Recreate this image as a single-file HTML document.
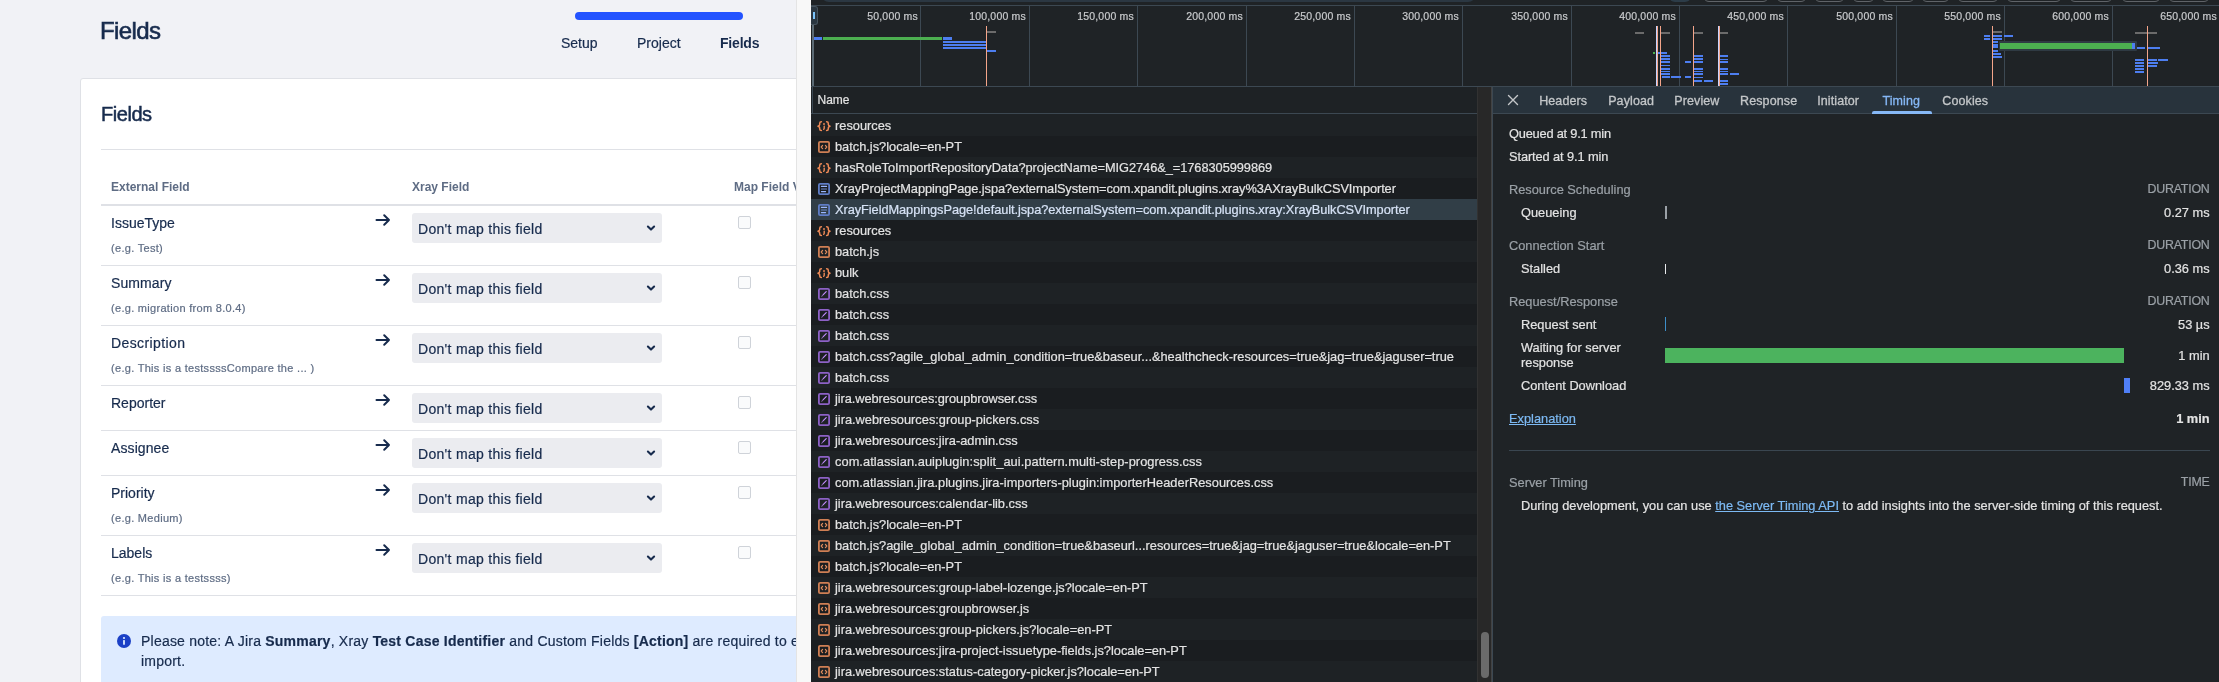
<!DOCTYPE html>
<html><head><meta charset="utf-8"><style>
*{margin:0;padding:0;box-sizing:border-box}
html,body{width:2219px;height:682px;overflow:hidden;background:#f8f8f8;font-family:"Liberation Sans",sans-serif}
.abs{position:absolute}
#page{position:absolute;left:0;top:0;width:796px;height:682px;background:#f1f2f6;overflow:hidden;color:#172b4d;will-change:transform}
#pgline{position:absolute;left:796px;top:0;width:1px;height:682px;background:#e4e4e4}
#dt{position:absolute;left:811px;top:0;width:1408px;height:682px;background:#1f2326;overflow:hidden;color:#e3e3e3;will-change:transform}
.t{position:absolute;white-space:nowrap}
#dt .t{-webkit-text-stroke:0.2px currentColor}
#page .t{-webkit-text-stroke:0.2px currentColor}
</style></head><body>
<div id="page">
<div class="t" style="left:100px;top:16px;font-size:24px;line-height:30px;color:#172b4d;-webkit-text-stroke:0.6px #172b4d;letter-spacing:-0.6px">Fields</div>
<div class="abs" style="left:575px;top:12px;width:168px;height:8px;border-radius:4px;background:#2353ff"></div>
<div class="t" style="left:561px;top:34px;font-size:14px;line-height:18px;color:#172b4d">Setup</div>
<div class="t" style="left:637px;top:34px;font-size:14px;line-height:18px;color:#172b4d">Project</div>
<div class="t" style="left:720px;top:34px;font-size:14px;line-height:18px;font-weight:700;color:#172b4d;letter-spacing:-0.2px;-webkit-text-stroke:0">Fields</div>
<div class="abs" style="left:80px;top:78px;width:760px;height:700px;background:#fff;border:1px solid #dfe1e6;border-radius:3px"></div>
<div class="t" style="left:101px;top:101px;font-size:20px;line-height:26px;color:#172b4d;-webkit-text-stroke:0.5px #172b4d;letter-spacing:-0.45px">Fields</div>
<div class="abs" style="left:101px;top:149px;width:700px;height:1px;background:#dfe1e6"></div>
<div class="t" style="left:111px;top:180px;font-size:12px;line-height:14px;font-weight:700;color:#5e6c84;-webkit-text-stroke:0">External Field</div>
<div class="t" style="left:412px;top:180px;font-size:12px;line-height:14px;font-weight:700;color:#5e6c84;-webkit-text-stroke:0">Xray Field</div>
<div class="t" style="left:734px;top:180px;font-size:12px;line-height:14px;font-weight:700;color:#5e6c84;-webkit-text-stroke:0">Map Field Values</div>
<div class="abs" style="left:101px;top:204px;width:700px;height:2px;background:#dfe1e6"></div>
<div class="t" style="left:111px;top:214px;font-size:14px;line-height:18px;color:#172b4d;letter-spacing:0px">IssueType</div>
<div class="t" style="left:111px;top:241px;font-size:11px;line-height:14px;color:#5e6c84;letter-spacing:0.3px">(e.g. Test)</div>
<svg class="abs" style="left:375px;top:213px" width="16" height="14" viewBox="0 0 16 14"><path d="M1.5 7H14M9.2 2.2L14 7L9.2 11.8" fill="none" stroke="#172b4d" stroke-width="2" stroke-linecap="round" stroke-linejoin="round"/></svg>
<div class="abs" style="left:412px;top:213px;width:250px;height:30px;background:#ebecf0;border-radius:3px"></div>
<div class="t" style="left:418px;top:220px;font-size:14px;line-height:18px;color:#172b4d;letter-spacing:0.3px">Don't map this field</div>
<svg class="abs" style="left:646px;top:224px" width="10" height="8" viewBox="0 0 10 8"><path d="M1.9 2.6L5 5.6L8.1 2.6" fill="none" stroke="#172b4d" stroke-width="2.1" stroke-linecap="round" stroke-linejoin="round"/></svg>
<div class="abs" style="left:738px;top:216px;width:13px;height:13px;border:1px solid #cfd3d9;border-radius:2px;background:#fafbfc"></div>
<div class="abs" style="left:101px;top:265px;width:700px;height:1px;background:#dfe1e6"></div>
<div class="t" style="left:111px;top:274px;font-size:14px;line-height:18px;color:#172b4d;letter-spacing:0.1px">Summary</div>
<div class="t" style="left:111px;top:301px;font-size:11px;line-height:14px;color:#5e6c84;letter-spacing:0.3px">(e.g. migration from 8.0.4)</div>
<svg class="abs" style="left:375px;top:273px" width="16" height="14" viewBox="0 0 16 14"><path d="M1.5 7H14M9.2 2.2L14 7L9.2 11.8" fill="none" stroke="#172b4d" stroke-width="2" stroke-linecap="round" stroke-linejoin="round"/></svg>
<div class="abs" style="left:412px;top:273px;width:250px;height:30px;background:#ebecf0;border-radius:3px"></div>
<div class="t" style="left:418px;top:280px;font-size:14px;line-height:18px;color:#172b4d;letter-spacing:0.3px">Don't map this field</div>
<svg class="abs" style="left:646px;top:284px" width="10" height="8" viewBox="0 0 10 8"><path d="M1.9 2.6L5 5.6L8.1 2.6" fill="none" stroke="#172b4d" stroke-width="2.1" stroke-linecap="round" stroke-linejoin="round"/></svg>
<div class="abs" style="left:738px;top:276px;width:13px;height:13px;border:1px solid #cfd3d9;border-radius:2px;background:#fafbfc"></div>
<div class="abs" style="left:101px;top:325px;width:700px;height:1px;background:#dfe1e6"></div>
<div class="t" style="left:111px;top:334px;font-size:14px;line-height:18px;color:#172b4d;letter-spacing:0.4px">Description</div>
<div class="t" style="left:111px;top:361px;font-size:11px;line-height:14px;color:#5e6c84;letter-spacing:0.3px">(e.g. This is a testssssCompare the ... )</div>
<svg class="abs" style="left:375px;top:333px" width="16" height="14" viewBox="0 0 16 14"><path d="M1.5 7H14M9.2 2.2L14 7L9.2 11.8" fill="none" stroke="#172b4d" stroke-width="2" stroke-linecap="round" stroke-linejoin="round"/></svg>
<div class="abs" style="left:412px;top:333px;width:250px;height:30px;background:#ebecf0;border-radius:3px"></div>
<div class="t" style="left:418px;top:340px;font-size:14px;line-height:18px;color:#172b4d;letter-spacing:0.3px">Don't map this field</div>
<svg class="abs" style="left:646px;top:344px" width="10" height="8" viewBox="0 0 10 8"><path d="M1.9 2.6L5 5.6L8.1 2.6" fill="none" stroke="#172b4d" stroke-width="2.1" stroke-linecap="round" stroke-linejoin="round"/></svg>
<div class="abs" style="left:738px;top:336px;width:13px;height:13px;border:1px solid #cfd3d9;border-radius:2px;background:#fafbfc"></div>
<div class="abs" style="left:101px;top:385px;width:700px;height:1px;background:#dfe1e6"></div>
<div class="t" style="left:111px;top:394px;font-size:14px;line-height:18px;color:#172b4d;letter-spacing:0px">Reporter</div>
<svg class="abs" style="left:375px;top:393px" width="16" height="14" viewBox="0 0 16 14"><path d="M1.5 7H14M9.2 2.2L14 7L9.2 11.8" fill="none" stroke="#172b4d" stroke-width="2" stroke-linecap="round" stroke-linejoin="round"/></svg>
<div class="abs" style="left:412px;top:393px;width:250px;height:30px;background:#ebecf0;border-radius:3px"></div>
<div class="t" style="left:418px;top:400px;font-size:14px;line-height:18px;color:#172b4d;letter-spacing:0.3px">Don't map this field</div>
<svg class="abs" style="left:646px;top:404px" width="10" height="8" viewBox="0 0 10 8"><path d="M1.9 2.6L5 5.6L8.1 2.6" fill="none" stroke="#172b4d" stroke-width="2.1" stroke-linecap="round" stroke-linejoin="round"/></svg>
<div class="abs" style="left:738px;top:396px;width:13px;height:13px;border:1px solid #cfd3d9;border-radius:2px;background:#fafbfc"></div>
<div class="abs" style="left:101px;top:430px;width:700px;height:1px;background:#dfe1e6"></div>
<div class="t" style="left:111px;top:439px;font-size:14px;line-height:18px;color:#172b4d;letter-spacing:0.1px">Assignee</div>
<svg class="abs" style="left:375px;top:438px" width="16" height="14" viewBox="0 0 16 14"><path d="M1.5 7H14M9.2 2.2L14 7L9.2 11.8" fill="none" stroke="#172b4d" stroke-width="2" stroke-linecap="round" stroke-linejoin="round"/></svg>
<div class="abs" style="left:412px;top:438px;width:250px;height:30px;background:#ebecf0;border-radius:3px"></div>
<div class="t" style="left:418px;top:445px;font-size:14px;line-height:18px;color:#172b4d;letter-spacing:0.3px">Don't map this field</div>
<svg class="abs" style="left:646px;top:449px" width="10" height="8" viewBox="0 0 10 8"><path d="M1.9 2.6L5 5.6L8.1 2.6" fill="none" stroke="#172b4d" stroke-width="2.1" stroke-linecap="round" stroke-linejoin="round"/></svg>
<div class="abs" style="left:738px;top:441px;width:13px;height:13px;border:1px solid #cfd3d9;border-radius:2px;background:#fafbfc"></div>
<div class="abs" style="left:101px;top:475px;width:700px;height:1px;background:#dfe1e6"></div>
<div class="t" style="left:111px;top:484px;font-size:14px;line-height:18px;color:#172b4d;letter-spacing:0px">Priority</div>
<div class="t" style="left:111px;top:511px;font-size:11px;line-height:14px;color:#5e6c84;letter-spacing:0.3px">(e.g. Medium)</div>
<svg class="abs" style="left:375px;top:483px" width="16" height="14" viewBox="0 0 16 14"><path d="M1.5 7H14M9.2 2.2L14 7L9.2 11.8" fill="none" stroke="#172b4d" stroke-width="2" stroke-linecap="round" stroke-linejoin="round"/></svg>
<div class="abs" style="left:412px;top:483px;width:250px;height:30px;background:#ebecf0;border-radius:3px"></div>
<div class="t" style="left:418px;top:490px;font-size:14px;line-height:18px;color:#172b4d;letter-spacing:0.3px">Don't map this field</div>
<svg class="abs" style="left:646px;top:494px" width="10" height="8" viewBox="0 0 10 8"><path d="M1.9 2.6L5 5.6L8.1 2.6" fill="none" stroke="#172b4d" stroke-width="2.1" stroke-linecap="round" stroke-linejoin="round"/></svg>
<div class="abs" style="left:738px;top:486px;width:13px;height:13px;border:1px solid #cfd3d9;border-radius:2px;background:#fafbfc"></div>
<div class="abs" style="left:101px;top:535px;width:700px;height:1px;background:#dfe1e6"></div>
<div class="t" style="left:111px;top:544px;font-size:14px;line-height:18px;color:#172b4d;letter-spacing:0px">Labels</div>
<div class="t" style="left:111px;top:571px;font-size:11px;line-height:14px;color:#5e6c84;letter-spacing:0.3px">(e.g. This is a testssss)</div>
<svg class="abs" style="left:375px;top:543px" width="16" height="14" viewBox="0 0 16 14"><path d="M1.5 7H14M9.2 2.2L14 7L9.2 11.8" fill="none" stroke="#172b4d" stroke-width="2" stroke-linecap="round" stroke-linejoin="round"/></svg>
<div class="abs" style="left:412px;top:543px;width:250px;height:30px;background:#ebecf0;border-radius:3px"></div>
<div class="t" style="left:418px;top:550px;font-size:14px;line-height:18px;color:#172b4d;letter-spacing:0.3px">Don't map this field</div>
<svg class="abs" style="left:646px;top:554px" width="10" height="8" viewBox="0 0 10 8"><path d="M1.9 2.6L5 5.6L8.1 2.6" fill="none" stroke="#172b4d" stroke-width="2.1" stroke-linecap="round" stroke-linejoin="round"/></svg>
<div class="abs" style="left:738px;top:546px;width:13px;height:13px;border:1px solid #cfd3d9;border-radius:2px;background:#fafbfc"></div>
<div class="abs" style="left:101px;top:595px;width:700px;height:1px;background:#dfe1e6"></div>
<div class="abs" style="left:101px;top:616px;width:720px;height:90px;background:#deebff;border-radius:3px"></div>
<svg class="abs" style="left:117px;top:634px" width="14" height="14" viewBox="0 0 14 14"><circle cx="7" cy="7" r="7" fill="#1b40c6"/><circle cx="7" cy="4" r="1.1" fill="#deebff"/><rect x="6.1" y="6" width="1.8" height="4.8" rx="0.5" fill="#deebff"/></svg>
<div class="t" style="left:141px;top:631px;font-size:14px;line-height:20px;color:#172b4d;letter-spacing:0.22px">Please note: A Jira <b>Summary</b>, Xray <b>Test Case Identifier</b> and Custom Fields <b>[Action]</b> are required to enable the<br>import.</div>
</div>
<div id="pgline"></div>
<div id="dt">
<div class="abs" style="left:10px;top:-20px;width:655px;height:21.5px;border-radius:8px;background:#2b3742"></div>
<div class="abs" style="left:858px;top:-20px;width:22px;height:22px;border-radius:6px;background:#2c3c48"></div>
<div class="abs" style="left:892px;top:-20px;width:66px;height:22px;border-radius:6px;border:1px solid #5f6368"></div>
<div class="abs" style="left:965px;top:-20px;width:31px;height:22px;border-radius:6px;border:1px solid #5f6368"></div>
<div class="abs" style="left:1003px;top:-20px;width:31px;height:22px;border-radius:6px;border:1px solid #5f6368"></div>
<div class="abs" style="left:1041px;top:-20px;width:23px;height:22px;border-radius:6px;border:1px solid #5f6368"></div>
<div class="abs" style="left:1070px;top:-20px;width:34px;height:22px;border-radius:6px;border:1px solid #5f6368"></div>
<div class="abs" style="left:1110px;top:-20px;width:29px;height:22px;border-radius:6px;border:1px solid #5f6368"></div>
<div class="abs" style="left:1146px;top:-20px;width:42px;height:22px;border-radius:6px;border:1px solid #5f6368"></div>
<div class="abs" style="left:1195px;top:-20px;width:56px;height:22px;border-radius:6px;border:1px solid #5f6368"></div>
<div class="abs" style="left:1258px;top:-20px;width:44px;height:22px;border-radius:6px;border:1px solid #5f6368"></div>
<div class="abs" style="left:1310px;top:-20px;width:40px;height:22px;border-radius:6px;border:1px solid #5f6368"></div>
<div class="abs" style="left:1357px;top:-20px;width:42px;height:22px;border-radius:6px;border:1px solid #5f6368"></div>
<div class="abs" style="left:0;top:5px;width:1408px;height:1px;background:#3c4852"></div>
<div class="abs" style="left:109px;top:6px;width:1px;height:80px;background:#3c4852"></div>
<div class="abs" style="left:218px;top:6px;width:1px;height:80px;background:#3c4852"></div>
<div class="abs" style="left:326px;top:6px;width:1px;height:80px;background:#3c4852"></div>
<div class="abs" style="left:435px;top:6px;width:1px;height:80px;background:#3c4852"></div>
<div class="abs" style="left:543px;top:6px;width:1px;height:80px;background:#3c4852"></div>
<div class="abs" style="left:651px;top:6px;width:1px;height:80px;background:#3c4852"></div>
<div class="abs" style="left:760px;top:6px;width:1px;height:80px;background:#3c4852"></div>
<div class="abs" style="left:868px;top:6px;width:1px;height:80px;background:#3c4852"></div>
<div class="abs" style="left:976px;top:6px;width:1px;height:80px;background:#3c4852"></div>
<div class="abs" style="left:1085px;top:6px;width:1px;height:80px;background:#3c4852"></div>
<div class="abs" style="left:1193px;top:6px;width:1px;height:80px;background:#3c4852"></div>
<div class="abs" style="left:1301px;top:6px;width:1px;height:80px;background:#3c4852"></div>
<div class="t" style="left:-13px;top:10px;width:120px;text-align:right;font-size:10.5px;line-height:13px;color:#c9cbcd;letter-spacing:0.2px">50,000 ms</div>
<div class="t" style="left:95px;top:10px;width:120px;text-align:right;font-size:10.5px;line-height:13px;color:#c9cbcd;letter-spacing:0.2px">100,000 ms</div>
<div class="t" style="left:203px;top:10px;width:120px;text-align:right;font-size:10.5px;line-height:13px;color:#c9cbcd;letter-spacing:0.2px">150,000 ms</div>
<div class="t" style="left:312px;top:10px;width:120px;text-align:right;font-size:10.5px;line-height:13px;color:#c9cbcd;letter-spacing:0.2px">200,000 ms</div>
<div class="t" style="left:420px;top:10px;width:120px;text-align:right;font-size:10.5px;line-height:13px;color:#c9cbcd;letter-spacing:0.2px">250,000 ms</div>
<div class="t" style="left:528px;top:10px;width:120px;text-align:right;font-size:10.5px;line-height:13px;color:#c9cbcd;letter-spacing:0.2px">300,000 ms</div>
<div class="t" style="left:637px;top:10px;width:120px;text-align:right;font-size:10.5px;line-height:13px;color:#c9cbcd;letter-spacing:0.2px">350,000 ms</div>
<div class="t" style="left:745px;top:10px;width:120px;text-align:right;font-size:10.5px;line-height:13px;color:#c9cbcd;letter-spacing:0.2px">400,000 ms</div>
<div class="t" style="left:853px;top:10px;width:120px;text-align:right;font-size:10.5px;line-height:13px;color:#c9cbcd;letter-spacing:0.2px">450,000 ms</div>
<div class="t" style="left:962px;top:10px;width:120px;text-align:right;font-size:10.5px;line-height:13px;color:#c9cbcd;letter-spacing:0.2px">500,000 ms</div>
<div class="t" style="left:1070px;top:10px;width:120px;text-align:right;font-size:10.5px;line-height:13px;color:#c9cbcd;letter-spacing:0.2px">550,000 ms</div>
<div class="t" style="left:1178px;top:10px;width:120px;text-align:right;font-size:10.5px;line-height:13px;color:#c9cbcd;letter-spacing:0.2px">600,000 ms</div>
<div class="t" style="left:1286px;top:10px;width:120px;text-align:right;font-size:10.5px;line-height:13px;color:#c9cbcd;letter-spacing:0.2px">650,000 ms</div>
<div class="abs" style="left:0px;top:6px;width:7px;height:19px;background:#2a3640;border:1px solid #46535d;border-left:0;border-radius:0 3px 3px 0"></div>
<div class="abs" style="left:2px;top:12px;width:1.5px;height:7px;background:#7cc4fa"></div>
<div class="abs" style="left:1px;top:25px;width:2px;height:61px;background:#5b6a74"></div>
<div class="abs" style="left:3.0px;top:37px;width:8.0px;height:3px;background:#4d7ef0"></div>
<div class="abs" style="left:12.0px;top:37px;width:119.0px;height:3px;background:#4caf50"></div>
<div class="abs" style="left:132.0px;top:37px;width:9.0px;height:3px;background:#4d7ef0"></div>
<div class="abs" style="left:132.0px;top:40.5px;width:43.0px;height:2px;background:#4d7ef0"></div>
<div class="abs" style="left:132.0px;top:43.5px;width:43.0px;height:2px;background:#4d7ef0"></div>
<div class="abs" style="left:132.0px;top:46.5px;width:43.0px;height:2px;background:#4d7ef0"></div>
<div class="abs" style="left:176.0px;top:31px;width:9.0px;height:2px;background:#6b6b6b"></div>
<div class="abs" style="left:176.0px;top:49.5px;width:9.0px;height:2px;background:#4d7ef0"></div>
<div class="abs" style="left:823.8px;top:31.5px;width:9.4px;height:2px;background:#6b6b6b"></div>
<div class="abs" style="left:850.0px;top:31.5px;width:9.0px;height:2px;background:#6b6b6b"></div>
<div class="abs" style="left:883.0px;top:31.5px;width:9.0px;height:2px;background:#6b6b6b"></div>
<div class="abs" style="left:909.0px;top:31.5px;width:8.0px;height:2px;background:#6b6b6b"></div>
<div class="abs" style="left:842.0px;top:52px;width:2.0px;height:2px;background:#4caf50"></div>
<div class="abs" style="left:847.0px;top:52px;width:9.0px;height:2px;background:#4d7ef0"></div>
<div class="abs" style="left:850.0px;top:55.2px;width:9.0px;height:2px;background:#4d7ef0"></div>
<div class="abs" style="left:850.0px;top:58.3px;width:9.0px;height:2px;background:#4d7ef0"></div>
<div class="abs" style="left:850.0px;top:61.4px;width:9.0px;height:2px;background:#4d7ef0"></div>
<div class="abs" style="left:850.0px;top:64.6px;width:9.0px;height:1.5px;background:#4d7ef0"></div>
<div class="abs" style="left:850.0px;top:67.5px;width:9.0px;height:2px;background:#4d7ef0"></div>
<div class="abs" style="left:850.0px;top:70.5px;width:9.0px;height:1.5px;background:#4d7ef0"></div>
<div class="abs" style="left:850.0px;top:73.3px;width:9.0px;height:2px;background:#4d7ef0"></div>
<div class="abs" style="left:851.0px;top:76.3px;width:8.0px;height:2px;background:#4d7ef0"></div>
<div class="abs" style="left:860.0px;top:76.3px;width:9.6px;height:2px;background:#4d7ef0"></div>
<div class="abs" style="left:874.0px;top:61.4px;width:6.0px;height:2px;background:#4d7ef0"></div>
<div class="abs" style="left:874.0px;top:76.3px;width:6.0px;height:2px;background:#4d7ef0"></div>
<div class="abs" style="left:883.0px;top:55.2px;width:9.0px;height:2px;background:#4d7ef0"></div>
<div class="abs" style="left:883.0px;top:58.3px;width:9.0px;height:2px;background:#4d7ef0"></div>
<div class="abs" style="left:883.0px;top:61.4px;width:9.0px;height:2px;background:#4d7ef0"></div>
<div class="abs" style="left:883.0px;top:67.5px;width:9.0px;height:2px;background:#4d7ef0"></div>
<div class="abs" style="left:883.0px;top:70.5px;width:9.0px;height:1.5px;background:#4d7ef0"></div>
<div class="abs" style="left:883.0px;top:73.3px;width:9.0px;height:2px;background:#4d7ef0"></div>
<div class="abs" style="left:883.0px;top:76.5px;width:9.0px;height:1.5px;background:#4d7ef0"></div>
<div class="abs" style="left:883.0px;top:79.6px;width:8.0px;height:2px;background:#4d7ef0"></div>
<div class="abs" style="left:893.0px;top:79.6px;width:9.0px;height:2px;background:#4d7ef0"></div>
<div class="abs" style="left:909.0px;top:55.2px;width:8.0px;height:2px;background:#4d7ef0"></div>
<div class="abs" style="left:909.0px;top:58.5px;width:8.0px;height:1.5px;background:#4d7ef0"></div>
<div class="abs" style="left:909.0px;top:61.4px;width:8.0px;height:2px;background:#4d7ef0"></div>
<div class="abs" style="left:909.0px;top:67.5px;width:8.0px;height:2px;background:#4d7ef0"></div>
<div class="abs" style="left:909.0px;top:70.5px;width:8.0px;height:1.5px;background:#4d7ef0"></div>
<div class="abs" style="left:909.0px;top:73.3px;width:8.0px;height:2px;background:#4d7ef0"></div>
<div class="abs" style="left:909.0px;top:79.6px;width:8.0px;height:2px;background:#4d7ef0"></div>
<div class="abs" style="left:909.0px;top:82.7px;width:8.0px;height:2px;background:#4d7ef0"></div>
<div class="abs" style="left:919.0px;top:73.3px;width:9.0px;height:2px;background:#4d7ef0"></div>
<div class="abs" style="left:1182.0px;top:31px;width:9.0px;height:2px;background:#6b6b6b"></div>
<div class="abs" style="left:1173.0px;top:34.5px;width:6.0px;height:2px;background:#4d7ef0"></div>
<div class="abs" style="left:1182.0px;top:34.5px;width:9.0px;height:2px;background:#4d7ef0"></div>
<div class="abs" style="left:1193.0px;top:34.5px;width:9.0px;height:2px;background:#4d7ef0"></div>
<div class="abs" style="left:1173.0px;top:37.5px;width:6.0px;height:2px;background:#4d7ef0"></div>
<div class="abs" style="left:1182.0px;top:37.5px;width:9.0px;height:2px;background:#4d7ef0"></div>
<div class="abs" style="left:1182.0px;top:40.5px;width:5.0px;height:2px;background:#4d7ef0"></div>
<div class="abs" style="left:1182.0px;top:43.5px;width:5.0px;height:2px;background:#4d7ef0"></div>
<div class="abs" style="left:1182.0px;top:46.2px;width:5.0px;height:2px;background:#4d7ef0"></div>
<div class="abs" style="left:1182.0px;top:49.5px;width:5.0px;height:2px;background:#4d7ef0"></div>
<div class="abs" style="left:1182.0px;top:52.5px;width:8.0px;height:2px;background:#4d7ef0"></div>
<div class="abs" style="left:1182.0px;top:55.5px;width:9.0px;height:2px;background:#4d7ef0"></div>
<div class="abs" style="left:1188px;top:41px;width:138px;height:10px;background:#2f3a43;border-radius:1px"></div>
<div class="abs" style="left:1189px;top:43px;width:133px;height:6px;background:#4caf50"></div>
<div class="abs" style="left:1321px;top:43px;width:3px;height:6px;background:#4d7ef0"></div>
<div class="abs" style="left:1326px;top:46.5px;width:8px;height:2px;background:#4d7ef0"></div>
<div class="abs" style="left:1337px;top:46.5px;width:12px;height:2px;background:#4d7ef0"></div>
<div class="abs" style="left:1324px;top:58.5px;width:9px;height:2px;background:#4d7ef0"></div>
<div class="abs" style="left:1337px;top:58.5px;width:9px;height:2px;background:#4d7ef0"></div>
<div class="abs" style="left:1347px;top:58.5px;width:10px;height:2px;background:#4d7ef0"></div>
<div class="abs" style="left:1324px;top:61.5px;width:9px;height:2px;background:#4d7ef0"></div>
<div class="abs" style="left:1337px;top:61.5px;width:10px;height:2px;background:#4d7ef0"></div>
<div class="abs" style="left:1324px;top:64.5px;width:9px;height:2px;background:#4d7ef0"></div>
<div class="abs" style="left:1337px;top:64.5px;width:9px;height:2px;background:#4d7ef0"></div>
<div class="abs" style="left:1324px;top:67.5px;width:9px;height:2px;background:#4d7ef0"></div>
<div class="abs" style="left:1324px;top:70.8px;width:9px;height:2px;background:#4d7ef0"></div>
<div class="abs" style="left:1324px;top:31.5px;width:22px;height:2px;background:#6b6b6b"></div>
<div class="abs" style="left:175.0px;top:26px;width:1.2px;height:60px;background:#f4a58a"></div>
<div class="abs" style="left:844.5px;top:26px;width:1.2px;height:60px;background:#c6d4ff"></div>
<div class="abs" style="left:846.0px;top:26px;width:1.2px;height:60px;background:#f4a58a"></div>
<div class="abs" style="left:849.0px;top:26px;width:1.2px;height:60px;background:#f4a58a"></div>
<div class="abs" style="left:882.0px;top:26px;width:1.2px;height:60px;background:#f4a58a"></div>
<div class="abs" style="left:907.0px;top:26px;width:1.2px;height:60px;background:#c6d4ff"></div>
<div class="abs" style="left:908.3px;top:26px;width:1.2px;height:60px;background:#f4a58a"></div>
<div class="abs" style="left:1181.0px;top:26px;width:1.2px;height:60px;background:#f4a58a"></div>
<div class="abs" style="left:1336.0px;top:26px;width:1.2px;height:60px;background:#f4a58a"></div>
<div class="abs" style="left:0;top:86px;width:1408px;height:1px;background:#3c4852"></div>
<div class="abs" style="left:0;top:87px;width:666px;height:26px;background:#1e2225"></div>
<div class="abs" style="left:1px;top:87px;width:1px;height:26px;background:#3c4852"></div>
<div class="t" style="left:6.5px;top:93px;font-size:12px;line-height:15px;color:#e3e3e3">Name</div>
<div class="abs" style="left:0;top:113px;width:666px;height:1px;background:#3c4852"></div>
<div class="abs" style="left:0;top:114px;width:666px;height:1px;background:#1e2225"></div>
<div class="abs" style="left:0;top:115px;width:666px;height:21px;background:#1e2225"></div>
<div class="abs" style="left:6px;top:119px;width:14px;height:14px"><svg width="14" height="14" viewBox="0 0 14 14"><g fill="none" stroke="#ee8a57" stroke-width="1.5" stroke-linecap="round" stroke-linejoin="round"><path d="M4.4 2.8C3.2 2.8 2.7 3.4 2.7 4.3V5.6C2.7 6.4 2.1 6.9 1 7.2C2.1 7.5 2.7 8 2.7 8.8V10.1C2.7 11 3.2 11.6 4.4 11.6"/><path d="M9.6 2.8C10.8 2.8 11.3 3.4 11.3 4.3V5.6C11.3 6.4 11.9 6.9 13 7.2C11.9 7.5 11.3 8 11.3 8.8V10.1C11.3 11 10.8 11.6 9.6 11.6"/></g><circle cx="7" cy="5" r="0.95" fill="#ee8a57"/><path d="M7.2 7.3V9.2C7.2 9.7 7 10 6.7 10.3" fill="none" stroke="#ee8a57" stroke-width="1.4" stroke-linecap="round"/></svg></div>
<div class="t" style="left:24px;top:118px;font-size:12.8px;line-height:15px;color:#e3e3e3;letter-spacing:0px">resources</div>
<div class="abs" style="left:0;top:136px;width:666px;height:21px;background:#1a1d20"></div>
<div class="abs" style="left:6px;top:140px;width:14px;height:14px"><svg width="14" height="14" viewBox="0 0 14 14"><rect x="1.9" y="1.9" width="10.2" height="10.2" rx="1.2" fill="none" stroke="#cf7f54" stroke-width="1.8"/><path d="M5.6 5.4L4.2 7L5.6 8.6M8.4 5.4L9.8 7L8.4 8.6" fill="none" stroke="#e08d5e" stroke-width="1.2" stroke-linecap="round" stroke-linejoin="round"/></svg></div>
<div class="t" style="left:24px;top:139px;font-size:12.8px;line-height:15px;color:#e3e3e3;letter-spacing:0px">batch.js?locale=en-PT</div>
<div class="abs" style="left:0;top:157px;width:666px;height:21px;background:#1e2225"></div>
<div class="abs" style="left:6px;top:161px;width:14px;height:14px"><svg width="14" height="14" viewBox="0 0 14 14"><g fill="none" stroke="#ee8a57" stroke-width="1.5" stroke-linecap="round" stroke-linejoin="round"><path d="M4.4 2.8C3.2 2.8 2.7 3.4 2.7 4.3V5.6C2.7 6.4 2.1 6.9 1 7.2C2.1 7.5 2.7 8 2.7 8.8V10.1C2.7 11 3.2 11.6 4.4 11.6"/><path d="M9.6 2.8C10.8 2.8 11.3 3.4 11.3 4.3V5.6C11.3 6.4 11.9 6.9 13 7.2C11.9 7.5 11.3 8 11.3 8.8V10.1C11.3 11 10.8 11.6 9.6 11.6"/></g><circle cx="7" cy="5" r="0.95" fill="#ee8a57"/><path d="M7.2 7.3V9.2C7.2 9.7 7 10 6.7 10.3" fill="none" stroke="#ee8a57" stroke-width="1.4" stroke-linecap="round"/></svg></div>
<div class="t" style="left:24px;top:160px;font-size:12.8px;line-height:15px;color:#e3e3e3;letter-spacing:-0.05px">hasRoleToImportRepositoryData?projectName=MIG2746&amp;_=1768305999869</div>
<div class="abs" style="left:0;top:178px;width:666px;height:21px;background:#1a1d20"></div>
<div class="abs" style="left:6px;top:182px;width:14px;height:14px"><svg width="14" height="14" viewBox="0 0 14 14"><rect x="1.9" y="1.9" width="10.2" height="10.2" rx="1.2" fill="none" stroke="#5f7dc6" stroke-width="1.8"/><path d="M4.4 4.4H9.6M4.4 9.6H8.6" fill="none" stroke="#9ab7ff" stroke-width="1.1" stroke-linecap="round"/><path d="M4.4 7H9.6" fill="none" stroke="#6f8cd0" stroke-width="1.1" stroke-linecap="round"/></svg></div>
<div class="t" style="left:24px;top:181px;font-size:12.8px;line-height:15px;color:#e3e3e3;letter-spacing:-0.08px">XrayProjectMappingPage.jspa?externalSystem=com.xpandit.plugins.xray%3AXrayBulkCSVImporter</div>
<div class="abs" style="left:0;top:199px;width:666px;height:21px;background:#313e47"></div>
<div class="abs" style="left:6px;top:203px;width:14px;height:14px"><svg width="14" height="14" viewBox="0 0 14 14"><rect x="1.9" y="1.9" width="10.2" height="10.2" rx="1.2" fill="none" stroke="#5f7dc6" stroke-width="1.8"/><path d="M4.4 4.4H9.6M4.4 9.6H8.6" fill="none" stroke="#9ab7ff" stroke-width="1.1" stroke-linecap="round"/><path d="M4.4 7H9.6" fill="none" stroke="#6f8cd0" stroke-width="1.1" stroke-linecap="round"/></svg></div>
<div class="t" style="left:24px;top:202px;font-size:12.8px;line-height:15px;color:#d6e2f5;letter-spacing:-0.065px">XrayFieldMappingsPage!default.jspa?externalSystem=com.xpandit.plugins.xray:XrayBulkCSVImporter</div>
<div class="abs" style="left:0;top:220px;width:666px;height:21px;background:#1a1d20"></div>
<div class="abs" style="left:6px;top:224px;width:14px;height:14px"><svg width="14" height="14" viewBox="0 0 14 14"><g fill="none" stroke="#ee8a57" stroke-width="1.5" stroke-linecap="round" stroke-linejoin="round"><path d="M4.4 2.8C3.2 2.8 2.7 3.4 2.7 4.3V5.6C2.7 6.4 2.1 6.9 1 7.2C2.1 7.5 2.7 8 2.7 8.8V10.1C2.7 11 3.2 11.6 4.4 11.6"/><path d="M9.6 2.8C10.8 2.8 11.3 3.4 11.3 4.3V5.6C11.3 6.4 11.9 6.9 13 7.2C11.9 7.5 11.3 8 11.3 8.8V10.1C11.3 11 10.8 11.6 9.6 11.6"/></g><circle cx="7" cy="5" r="0.95" fill="#ee8a57"/><path d="M7.2 7.3V9.2C7.2 9.7 7 10 6.7 10.3" fill="none" stroke="#ee8a57" stroke-width="1.4" stroke-linecap="round"/></svg></div>
<div class="t" style="left:24px;top:223px;font-size:12.8px;line-height:15px;color:#e3e3e3;letter-spacing:0px">resources</div>
<div class="abs" style="left:0;top:241px;width:666px;height:21px;background:#1e2225"></div>
<div class="abs" style="left:6px;top:245px;width:14px;height:14px"><svg width="14" height="14" viewBox="0 0 14 14"><rect x="1.9" y="1.9" width="10.2" height="10.2" rx="1.2" fill="none" stroke="#cf7f54" stroke-width="1.8"/><path d="M5.6 5.4L4.2 7L5.6 8.6M8.4 5.4L9.8 7L8.4 8.6" fill="none" stroke="#e08d5e" stroke-width="1.2" stroke-linecap="round" stroke-linejoin="round"/></svg></div>
<div class="t" style="left:24px;top:244px;font-size:12.8px;line-height:15px;color:#e3e3e3;letter-spacing:0px">batch.js</div>
<div class="abs" style="left:0;top:262px;width:666px;height:21px;background:#1a1d20"></div>
<div class="abs" style="left:6px;top:266px;width:14px;height:14px"><svg width="14" height="14" viewBox="0 0 14 14"><g fill="none" stroke="#ee8a57" stroke-width="1.5" stroke-linecap="round" stroke-linejoin="round"><path d="M4.4 2.8C3.2 2.8 2.7 3.4 2.7 4.3V5.6C2.7 6.4 2.1 6.9 1 7.2C2.1 7.5 2.7 8 2.7 8.8V10.1C2.7 11 3.2 11.6 4.4 11.6"/><path d="M9.6 2.8C10.8 2.8 11.3 3.4 11.3 4.3V5.6C11.3 6.4 11.9 6.9 13 7.2C11.9 7.5 11.3 8 11.3 8.8V10.1C11.3 11 10.8 11.6 9.6 11.6"/></g><circle cx="7" cy="5" r="0.95" fill="#ee8a57"/><path d="M7.2 7.3V9.2C7.2 9.7 7 10 6.7 10.3" fill="none" stroke="#ee8a57" stroke-width="1.4" stroke-linecap="round"/></svg></div>
<div class="t" style="left:24px;top:265px;font-size:12.8px;line-height:15px;color:#e3e3e3;letter-spacing:0px">bulk</div>
<div class="abs" style="left:0;top:283px;width:666px;height:21px;background:#1e2225"></div>
<div class="abs" style="left:6px;top:287px;width:14px;height:14px"><svg width="14" height="14" viewBox="0 0 14 14"><rect x="1.9" y="1.9" width="10.2" height="10.2" rx="1.2" fill="none" stroke="#8d61c6" stroke-width="1.8"/><path d="M9.2 4.6L6.2 7.6" stroke="#c28cff" stroke-width="1.2" stroke-linecap="round"/><path d="M4.3 9.8C4.6 8.6 5.2 8.2 6 8.1C6 8.9 5.4 9.6 4.3 9.8Z" fill="#c28cff"/></svg></div>
<div class="t" style="left:24px;top:286px;font-size:12.8px;line-height:15px;color:#e3e3e3;letter-spacing:0px">batch.css</div>
<div class="abs" style="left:0;top:304px;width:666px;height:21px;background:#1a1d20"></div>
<div class="abs" style="left:6px;top:308px;width:14px;height:14px"><svg width="14" height="14" viewBox="0 0 14 14"><rect x="1.9" y="1.9" width="10.2" height="10.2" rx="1.2" fill="none" stroke="#8d61c6" stroke-width="1.8"/><path d="M9.2 4.6L6.2 7.6" stroke="#c28cff" stroke-width="1.2" stroke-linecap="round"/><path d="M4.3 9.8C4.6 8.6 5.2 8.2 6 8.1C6 8.9 5.4 9.6 4.3 9.8Z" fill="#c28cff"/></svg></div>
<div class="t" style="left:24px;top:307px;font-size:12.8px;line-height:15px;color:#e3e3e3;letter-spacing:0px">batch.css</div>
<div class="abs" style="left:0;top:325px;width:666px;height:21px;background:#1e2225"></div>
<div class="abs" style="left:6px;top:329px;width:14px;height:14px"><svg width="14" height="14" viewBox="0 0 14 14"><rect x="1.9" y="1.9" width="10.2" height="10.2" rx="1.2" fill="none" stroke="#8d61c6" stroke-width="1.8"/><path d="M9.2 4.6L6.2 7.6" stroke="#c28cff" stroke-width="1.2" stroke-linecap="round"/><path d="M4.3 9.8C4.6 8.6 5.2 8.2 6 8.1C6 8.9 5.4 9.6 4.3 9.8Z" fill="#c28cff"/></svg></div>
<div class="t" style="left:24px;top:328px;font-size:12.8px;line-height:15px;color:#e3e3e3;letter-spacing:0px">batch.css</div>
<div class="abs" style="left:0;top:346px;width:666px;height:21px;background:#1a1d20"></div>
<div class="abs" style="left:6px;top:350px;width:14px;height:14px"><svg width="14" height="14" viewBox="0 0 14 14"><rect x="1.9" y="1.9" width="10.2" height="10.2" rx="1.2" fill="none" stroke="#8d61c6" stroke-width="1.8"/><path d="M9.2 4.6L6.2 7.6" stroke="#c28cff" stroke-width="1.2" stroke-linecap="round"/><path d="M4.3 9.8C4.6 8.6 5.2 8.2 6 8.1C6 8.9 5.4 9.6 4.3 9.8Z" fill="#c28cff"/></svg></div>
<div class="t" style="left:24px;top:349px;font-size:12.8px;line-height:15px;color:#e3e3e3;letter-spacing:0px">batch.css?agile_global_admin_condition=true&amp;baseur...&amp;healthcheck-resources=true&amp;jag=true&amp;jaguser=true</div>
<div class="abs" style="left:0;top:367px;width:666px;height:21px;background:#1e2225"></div>
<div class="abs" style="left:6px;top:371px;width:14px;height:14px"><svg width="14" height="14" viewBox="0 0 14 14"><rect x="1.9" y="1.9" width="10.2" height="10.2" rx="1.2" fill="none" stroke="#8d61c6" stroke-width="1.8"/><path d="M9.2 4.6L6.2 7.6" stroke="#c28cff" stroke-width="1.2" stroke-linecap="round"/><path d="M4.3 9.8C4.6 8.6 5.2 8.2 6 8.1C6 8.9 5.4 9.6 4.3 9.8Z" fill="#c28cff"/></svg></div>
<div class="t" style="left:24px;top:370px;font-size:12.8px;line-height:15px;color:#e3e3e3;letter-spacing:0px">batch.css</div>
<div class="abs" style="left:0;top:388px;width:666px;height:21px;background:#1a1d20"></div>
<div class="abs" style="left:6px;top:392px;width:14px;height:14px"><svg width="14" height="14" viewBox="0 0 14 14"><rect x="1.9" y="1.9" width="10.2" height="10.2" rx="1.2" fill="none" stroke="#8d61c6" stroke-width="1.8"/><path d="M9.2 4.6L6.2 7.6" stroke="#c28cff" stroke-width="1.2" stroke-linecap="round"/><path d="M4.3 9.8C4.6 8.6 5.2 8.2 6 8.1C6 8.9 5.4 9.6 4.3 9.8Z" fill="#c28cff"/></svg></div>
<div class="t" style="left:24px;top:391px;font-size:12.8px;line-height:15px;color:#e3e3e3;letter-spacing:-0.06px">jira.webresources:groupbrowser.css</div>
<div class="abs" style="left:0;top:409px;width:666px;height:21px;background:#1e2225"></div>
<div class="abs" style="left:6px;top:413px;width:14px;height:14px"><svg width="14" height="14" viewBox="0 0 14 14"><rect x="1.9" y="1.9" width="10.2" height="10.2" rx="1.2" fill="none" stroke="#8d61c6" stroke-width="1.8"/><path d="M9.2 4.6L6.2 7.6" stroke="#c28cff" stroke-width="1.2" stroke-linecap="round"/><path d="M4.3 9.8C4.6 8.6 5.2 8.2 6 8.1C6 8.9 5.4 9.6 4.3 9.8Z" fill="#c28cff"/></svg></div>
<div class="t" style="left:24px;top:412px;font-size:12.8px;line-height:15px;color:#e3e3e3;letter-spacing:0px">jira.webresources:group-pickers.css</div>
<div class="abs" style="left:0;top:430px;width:666px;height:21px;background:#1a1d20"></div>
<div class="abs" style="left:6px;top:434px;width:14px;height:14px"><svg width="14" height="14" viewBox="0 0 14 14"><rect x="1.9" y="1.9" width="10.2" height="10.2" rx="1.2" fill="none" stroke="#8d61c6" stroke-width="1.8"/><path d="M9.2 4.6L6.2 7.6" stroke="#c28cff" stroke-width="1.2" stroke-linecap="round"/><path d="M4.3 9.8C4.6 8.6 5.2 8.2 6 8.1C6 8.9 5.4 9.6 4.3 9.8Z" fill="#c28cff"/></svg></div>
<div class="t" style="left:24px;top:433px;font-size:12.8px;line-height:15px;color:#e3e3e3;letter-spacing:0px">jira.webresources:jira-admin.css</div>
<div class="abs" style="left:0;top:451px;width:666px;height:21px;background:#1e2225"></div>
<div class="abs" style="left:6px;top:455px;width:14px;height:14px"><svg width="14" height="14" viewBox="0 0 14 14"><rect x="1.9" y="1.9" width="10.2" height="10.2" rx="1.2" fill="none" stroke="#8d61c6" stroke-width="1.8"/><path d="M9.2 4.6L6.2 7.6" stroke="#c28cff" stroke-width="1.2" stroke-linecap="round"/><path d="M4.3 9.8C4.6 8.6 5.2 8.2 6 8.1C6 8.9 5.4 9.6 4.3 9.8Z" fill="#c28cff"/></svg></div>
<div class="t" style="left:24px;top:454px;font-size:12.8px;line-height:15px;color:#e3e3e3;letter-spacing:0.065px">com.atlassian.auiplugin:split_aui.pattern.multi-step-progress.css</div>
<div class="abs" style="left:0;top:472px;width:666px;height:21px;background:#1a1d20"></div>
<div class="abs" style="left:6px;top:476px;width:14px;height:14px"><svg width="14" height="14" viewBox="0 0 14 14"><rect x="1.9" y="1.9" width="10.2" height="10.2" rx="1.2" fill="none" stroke="#8d61c6" stroke-width="1.8"/><path d="M9.2 4.6L6.2 7.6" stroke="#c28cff" stroke-width="1.2" stroke-linecap="round"/><path d="M4.3 9.8C4.6 8.6 5.2 8.2 6 8.1C6 8.9 5.4 9.6 4.3 9.8Z" fill="#c28cff"/></svg></div>
<div class="t" style="left:24px;top:475px;font-size:12.8px;line-height:15px;color:#e3e3e3;letter-spacing:0.03px">com.atlassian.jira.plugins.jira-importers-plugin:importerHeaderResources.css</div>
<div class="abs" style="left:0;top:493px;width:666px;height:21px;background:#1e2225"></div>
<div class="abs" style="left:6px;top:497px;width:14px;height:14px"><svg width="14" height="14" viewBox="0 0 14 14"><rect x="1.9" y="1.9" width="10.2" height="10.2" rx="1.2" fill="none" stroke="#8d61c6" stroke-width="1.8"/><path d="M9.2 4.6L6.2 7.6" stroke="#c28cff" stroke-width="1.2" stroke-linecap="round"/><path d="M4.3 9.8C4.6 8.6 5.2 8.2 6 8.1C6 8.9 5.4 9.6 4.3 9.8Z" fill="#c28cff"/></svg></div>
<div class="t" style="left:24px;top:496px;font-size:12.8px;line-height:15px;color:#e3e3e3;letter-spacing:0px">jira.webresources:calendar-lib.css</div>
<div class="abs" style="left:0;top:514px;width:666px;height:21px;background:#1a1d20"></div>
<div class="abs" style="left:6px;top:518px;width:14px;height:14px"><svg width="14" height="14" viewBox="0 0 14 14"><rect x="1.9" y="1.9" width="10.2" height="10.2" rx="1.2" fill="none" stroke="#cf7f54" stroke-width="1.8"/><path d="M5.6 5.4L4.2 7L5.6 8.6M8.4 5.4L9.8 7L8.4 8.6" fill="none" stroke="#e08d5e" stroke-width="1.2" stroke-linecap="round" stroke-linejoin="round"/></svg></div>
<div class="t" style="left:24px;top:517px;font-size:12.8px;line-height:15px;color:#e3e3e3;letter-spacing:0px">batch.js?locale=en-PT</div>
<div class="abs" style="left:0;top:535px;width:666px;height:21px;background:#1e2225"></div>
<div class="abs" style="left:6px;top:539px;width:14px;height:14px"><svg width="14" height="14" viewBox="0 0 14 14"><rect x="1.9" y="1.9" width="10.2" height="10.2" rx="1.2" fill="none" stroke="#cf7f54" stroke-width="1.8"/><path d="M5.6 5.4L4.2 7L5.6 8.6M8.4 5.4L9.8 7L8.4 8.6" fill="none" stroke="#e08d5e" stroke-width="1.2" stroke-linecap="round" stroke-linejoin="round"/></svg></div>
<div class="t" style="left:24px;top:538px;font-size:12.8px;line-height:15px;color:#e3e3e3;letter-spacing:0px">batch.js?agile_global_admin_condition=true&amp;baseurl...resources=true&amp;jag=true&amp;jaguser=true&amp;locale=en-PT</div>
<div class="abs" style="left:0;top:556px;width:666px;height:21px;background:#1a1d20"></div>
<div class="abs" style="left:6px;top:560px;width:14px;height:14px"><svg width="14" height="14" viewBox="0 0 14 14"><rect x="1.9" y="1.9" width="10.2" height="10.2" rx="1.2" fill="none" stroke="#cf7f54" stroke-width="1.8"/><path d="M5.6 5.4L4.2 7L5.6 8.6M8.4 5.4L9.8 7L8.4 8.6" fill="none" stroke="#e08d5e" stroke-width="1.2" stroke-linecap="round" stroke-linejoin="round"/></svg></div>
<div class="t" style="left:24px;top:559px;font-size:12.8px;line-height:15px;color:#e3e3e3;letter-spacing:0px">batch.js?locale=en-PT</div>
<div class="abs" style="left:0;top:577px;width:666px;height:21px;background:#1e2225"></div>
<div class="abs" style="left:6px;top:581px;width:14px;height:14px"><svg width="14" height="14" viewBox="0 0 14 14"><rect x="1.9" y="1.9" width="10.2" height="10.2" rx="1.2" fill="none" stroke="#cf7f54" stroke-width="1.8"/><path d="M5.6 5.4L4.2 7L5.6 8.6M8.4 5.4L9.8 7L8.4 8.6" fill="none" stroke="#e08d5e" stroke-width="1.2" stroke-linecap="round" stroke-linejoin="round"/></svg></div>
<div class="t" style="left:24px;top:580px;font-size:12.8px;line-height:15px;color:#e3e3e3;letter-spacing:0px">jira.webresources:group-label-lozenge.js?locale=en-PT</div>
<div class="abs" style="left:0;top:598px;width:666px;height:21px;background:#1a1d20"></div>
<div class="abs" style="left:6px;top:602px;width:14px;height:14px"><svg width="14" height="14" viewBox="0 0 14 14"><rect x="1.9" y="1.9" width="10.2" height="10.2" rx="1.2" fill="none" stroke="#cf7f54" stroke-width="1.8"/><path d="M5.6 5.4L4.2 7L5.6 8.6M8.4 5.4L9.8 7L8.4 8.6" fill="none" stroke="#e08d5e" stroke-width="1.2" stroke-linecap="round" stroke-linejoin="round"/></svg></div>
<div class="t" style="left:24px;top:601px;font-size:12.8px;line-height:15px;color:#e3e3e3;letter-spacing:0px">jira.webresources:groupbrowser.js</div>
<div class="abs" style="left:0;top:619px;width:666px;height:21px;background:#1e2225"></div>
<div class="abs" style="left:6px;top:623px;width:14px;height:14px"><svg width="14" height="14" viewBox="0 0 14 14"><rect x="1.9" y="1.9" width="10.2" height="10.2" rx="1.2" fill="none" stroke="#cf7f54" stroke-width="1.8"/><path d="M5.6 5.4L4.2 7L5.6 8.6M8.4 5.4L9.8 7L8.4 8.6" fill="none" stroke="#e08d5e" stroke-width="1.2" stroke-linecap="round" stroke-linejoin="round"/></svg></div>
<div class="t" style="left:24px;top:622px;font-size:12.8px;line-height:15px;color:#e3e3e3;letter-spacing:0px">jira.webresources:group-pickers.js?locale=en-PT</div>
<div class="abs" style="left:0;top:640px;width:666px;height:21px;background:#1a1d20"></div>
<div class="abs" style="left:6px;top:644px;width:14px;height:14px"><svg width="14" height="14" viewBox="0 0 14 14"><rect x="1.9" y="1.9" width="10.2" height="10.2" rx="1.2" fill="none" stroke="#cf7f54" stroke-width="1.8"/><path d="M5.6 5.4L4.2 7L5.6 8.6M8.4 5.4L9.8 7L8.4 8.6" fill="none" stroke="#e08d5e" stroke-width="1.2" stroke-linecap="round" stroke-linejoin="round"/></svg></div>
<div class="t" style="left:24px;top:643px;font-size:12.8px;line-height:15px;color:#e3e3e3;letter-spacing:0px">jira.webresources:jira-project-issuetype-fields.js?locale=en-PT</div>
<div class="abs" style="left:0;top:661px;width:666px;height:21px;background:#1e2225"></div>
<div class="abs" style="left:6px;top:665px;width:14px;height:14px"><svg width="14" height="14" viewBox="0 0 14 14"><rect x="1.9" y="1.9" width="10.2" height="10.2" rx="1.2" fill="none" stroke="#cf7f54" stroke-width="1.8"/><path d="M5.6 5.4L4.2 7L5.6 8.6M8.4 5.4L9.8 7L8.4 8.6" fill="none" stroke="#e08d5e" stroke-width="1.2" stroke-linecap="round" stroke-linejoin="round"/></svg></div>
<div class="t" style="left:24px;top:664px;font-size:12.8px;line-height:15px;color:#e3e3e3;letter-spacing:0px">jira.webresources:status-category-picker.js?locale=en-PT</div>
<div class="abs" style="left:666px;top:87px;width:15px;height:595px;background:#282828;border-left:1px solid #323232;border-right:1px solid #424242"></div>
<div class="abs" style="left:670px;top:632px;width:8px;height:46px;background:#6b6b6b;border-radius:4px"></div>
<div class="abs" style="left:681px;top:87px;width:1px;height:595px;background:#3c4852"></div>
<div class="abs" style="left:682px;top:87px;width:726px;height:26px;background:#28333c"></div>
<div class="abs" style="left:682px;top:113px;width:726px;height:1px;background:#3c4852"></div>
<svg class="abs" style="left:696px;top:94px" width="12" height="12" viewBox="0 0 12 12"><path d="M1.5 1.5L10.5 10.5M10.5 1.5L1.5 10.5" stroke="#c4c7c9" stroke-width="1.4" stroke-linecap="round"/></svg>
<div class="t" style="left:728.2px;top:94px;font-size:12.5px;line-height:15px;color:#c4c7c9;-webkit-text-stroke:0.3px #c4c7c9;letter-spacing:0.1px">Headers</div>
<div class="t" style="left:797.2px;top:94px;font-size:12.5px;line-height:15px;color:#c4c7c9;-webkit-text-stroke:0.3px #c4c7c9;letter-spacing:0.1px">Payload</div>
<div class="t" style="left:863.3px;top:94px;font-size:12.5px;line-height:15px;color:#c4c7c9;-webkit-text-stroke:0.3px #c4c7c9;letter-spacing:0.1px">Preview</div>
<div class="t" style="left:929.0999999999999px;top:94px;font-size:12.5px;line-height:15px;color:#c4c7c9;-webkit-text-stroke:0.3px #c4c7c9;letter-spacing:0.1px">Response</div>
<div class="t" style="left:1006.2px;top:94px;font-size:12.5px;line-height:15px;color:#c4c7c9;-webkit-text-stroke:0.3px #c4c7c9;letter-spacing:0.1px">Initiator</div>
<div class="t" style="left:1071.4px;top:94px;font-size:12.5px;line-height:15px;color:#86b8f6;-webkit-text-stroke:0.3px #86b8f6;letter-spacing:0.1px">Timing</div>
<div class="t" style="left:1131.3px;top:94px;font-size:12.5px;line-height:15px;color:#c4c7c9;-webkit-text-stroke:0.3px #c4c7c9;letter-spacing:0.1px">Cookies</div>
<div class="abs" style="left:1061px;top:111px;width:60px;height:3px;background:#86b8f6;border-radius:2px 2px 0 0"></div>
<div class="t" style="left:698px;top:125.5px;font-size:12.8px;line-height:15px;color:#e3e3e3;letter-spacing:-0.2px">Queued at 9.1 min</div>
<div class="t" style="left:698px;top:148.5px;font-size:12.8px;line-height:15px;color:#e3e3e3;letter-spacing:-0.1px">Started at 9.1 min</div>
<div class="t" style="left:698px;top:182.0px;font-size:12.8px;line-height:15px;color:#9aa0a6;">Resource Scheduling</div>
<div class="t" style="left:998.5999999999999px;width:400px;text-align:right;top:182.0px;font-size:12.4px;line-height:15px;color:#9aa0a6;letter-spacing:-0.2px">DURATION</div>
<div class="t" style="left:710px;top:205.0px;font-size:12.8px;line-height:15px;color:#e3e3e3;">Queueing</div>
<div class="t" style="left:998.5999999999999px;width:400px;text-align:right;top:205.0px;font-size:12.8px;line-height:15px;color:#e3e3e3;">0.27 ms</div>
<div class="t" style="left:698px;top:238.2px;font-size:12.8px;line-height:15px;color:#9aa0a6;">Connection Start</div>
<div class="t" style="left:998.5999999999999px;width:400px;text-align:right;top:238.2px;font-size:12.4px;line-height:15px;color:#9aa0a6;letter-spacing:-0.2px">DURATION</div>
<div class="t" style="left:710px;top:261.1px;font-size:12.8px;line-height:15px;color:#e3e3e3;">Stalled</div>
<div class="t" style="left:998.5999999999999px;width:400px;text-align:right;top:261.1px;font-size:12.8px;line-height:15px;color:#e3e3e3;">0.36 ms</div>
<div class="t" style="left:698px;top:293.9px;font-size:12.8px;line-height:15px;color:#9aa0a6;">Request/Response</div>
<div class="t" style="left:998.5999999999999px;width:400px;text-align:right;top:293.9px;font-size:12.4px;line-height:15px;color:#9aa0a6;letter-spacing:-0.2px">DURATION</div>
<div class="t" style="left:710px;top:316.9px;font-size:12.8px;line-height:15px;color:#e3e3e3;">Request sent</div>
<div class="t" style="left:998.5999999999999px;width:400px;text-align:right;top:316.9px;font-size:12.8px;line-height:15px;color:#e3e3e3;">53 µs</div>
<div class="t" style="left:710px;top:340.3px;font-size:12.8px;line-height:15px;color:#e3e3e3;">Waiting for server</div>
<div class="t" style="left:710px;top:355.2px;font-size:12.8px;line-height:15px;color:#e3e3e3;">response</div>
<div class="t" style="left:998.5999999999999px;width:400px;text-align:right;top:347.9px;font-size:12.8px;line-height:15px;color:#e3e3e3;">1 min</div>
<div class="t" style="left:710px;top:378.1px;font-size:12.8px;line-height:15px;color:#e3e3e3;">Content Download</div>
<div class="t" style="left:998.5999999999999px;width:400px;text-align:right;top:378.1px;font-size:12.8px;line-height:15px;color:#e3e3e3;">829.33 ms</div>
<div class="abs" style="left:854px;top:206px;width:2px;height:13px;background:#9aa0a6"></div>
<div class="abs" style="left:854px;top:264px;width:1px;height:10px;background:#e8eaed"></div>
<div class="abs" style="left:854px;top:317px;width:1px;height:14px;background:#3d8ec9"></div>
<div class="abs" style="left:854px;top:348px;width:459px;height:15px;background:#4cb35e"></div>
<div class="abs" style="left:1313px;top:378px;width:6px;height:15px;background:#4f7ff7"></div>
<div class="t" style="left:698px;top:411.2px;font-size:12.8px;line-height:15px;color:#7dbaf4;"><span style="text-decoration:underline">Explanation</span></div>
<div class="t" style="left:998.5999999999999px;width:400px;text-align:right;top:411.2px;font-size:12.8px;line-height:15px;color:#e3e3e3;font-weight:700">1 min</div>
<div class="abs" style="left:698px;top:450px;width:701px;height:1px;background:#3a4650"></div>
<div class="t" style="left:698px;top:475.0px;font-size:12.8px;line-height:15px;color:#9aa0a6;">Server Timing</div>
<div class="t" style="left:998.5999999999999px;width:400px;text-align:right;top:475.0px;font-size:12.4px;line-height:15px;color:#9aa0a6;letter-spacing:-0.2px">TIME</div>
<div class="t" style="left:710px;top:498.1px;font-size:12.8px;line-height:15px;color:#e3e3e3;">During development, you can use <span style="color:#7dbaf4;text-decoration:underline">the Server Timing API</span> to add insights into the server-side timing of this request.</div>
</div>
</body></html>
